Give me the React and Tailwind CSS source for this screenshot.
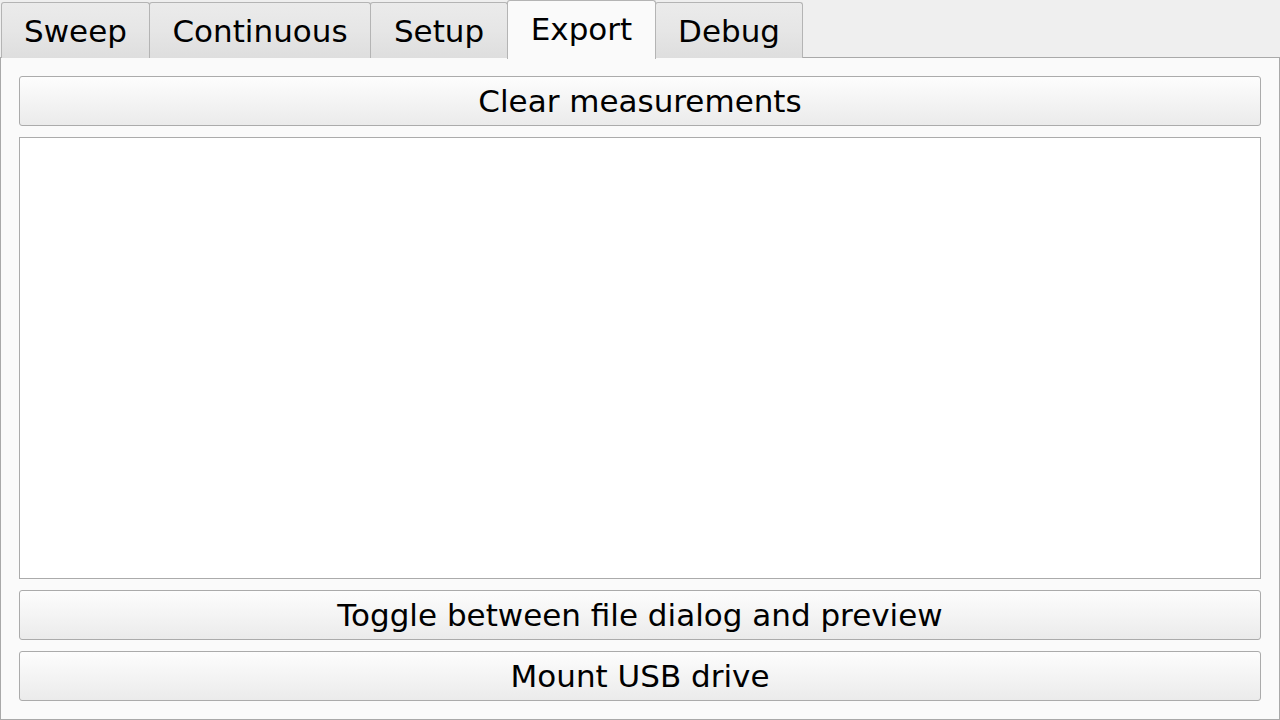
import React, { useState } from 'react';

const tabs = [
  { name: 'Sweep', w: 'w-[149px]' },
  { name: 'Continuous', w: 'w-[222px]' },
  { name: 'Setup', w: 'w-[138px]' },
  { name: 'Export', w: 'w-[149px]' },
  { name: 'Debug', w: 'w-[148px]' },
];

const Button = ({ children }) => (
  <button
    type="button"
    className="h-[50px] w-full shrink-0 rounded-[3px] border border-[#ababab] bg-gradient-to-b from-[#fdfdfd] to-[#ebebeb] text-[31px] leading-none text-black"
  >
    {children}
  </button>
);

export default function App() {
  const [active, setActive] = useState('Export');

  return (
    <div
      className="flex h-[720px] w-[1280px] flex-col bg-[#efefef]"
      style={{ fontFamily: '"DejaVu Sans", sans-serif' }}
    >
      {/* Tab bar */}
      <div className="relative z-10 flex h-[58px] items-end pl-px">
        {tabs.map((tab, i) => {
          const selected = tab.name === active;
          return (
            <div
              key={tab.name}
              onClick={() => setActive(tab.name)}
              className={`${tab.w} ${i > 0 ? '-ml-px' : ''} flex cursor-pointer items-center justify-center rounded-t-[3px] border border-b-0 border-[#b4b4b4] text-[31px] leading-none text-black ${
                selected
                  ? 'relative z-10 h-[59px] -mb-px bg-[#fafafa] pb-[1px]'
                  : 'h-[56px] bg-gradient-to-b from-[#ebebeb] via-[#e6e6e6] to-[#dedede] pt-[1px]'
              }`}
            >
              {tab.name}
            </div>
          );
        })}
      </div>

      {/* Pane */}
      <div className="-mt-px flex h-[663px] flex-col gap-[11px] border border-[#a9a9a9] bg-[#fafafa] px-[18px] pt-[18px] pb-[17px]">
        <Button>Clear measurements</Button>
        <div className="h-[442px] w-full shrink-0 border border-[#ababab] bg-white" />
        <Button>Toggle between file dialog and preview</Button>
        <Button>Mount USB drive</Button>
      </div>
    </div>
  );
}
